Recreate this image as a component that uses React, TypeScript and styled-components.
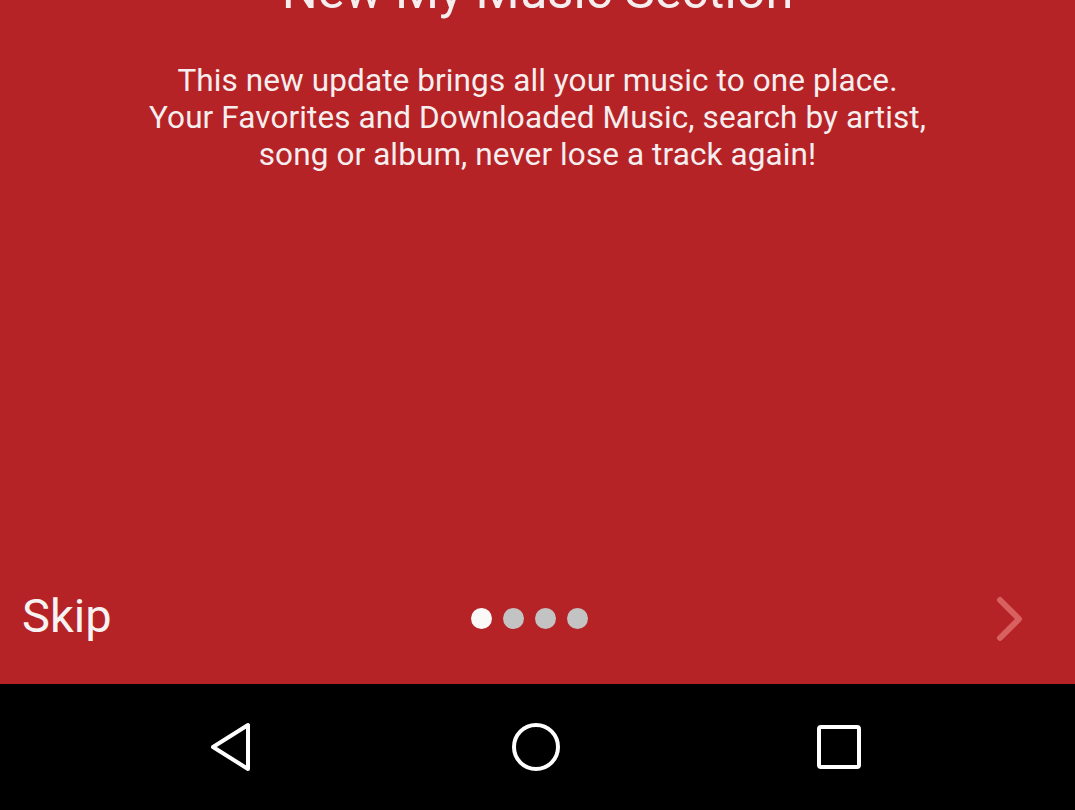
import styled, { createGlobalStyle } from "styled-components";

const Global = createGlobalStyle`
  html, body {
    margin: 0;
    padding: 0;
    overflow: hidden;
  }
  body {
    font-family: Roboto, "Liberation Sans", sans-serif;
  }
`;

const Screen = styled.div`
  width: 1075px;
  height: 810px;
  display: flex;
  flex-direction: column;
  overflow: hidden;
`;

const Slide = styled.div`
  flex: 1;
  background: #b52327;
  display: flex;
  flex-direction: column;
  color: #f6eeee;
`;

const Title = styled.h1`
  margin: -35px 0 0;
  font-size: 50.5px;
  line-height: 52px;
  font-weight: 400;
  text-align: center;
`;

const Body = styled.p`
  margin: 45px 0 0;
  font-size: 31.5px;
  line-height: 37px;
  letter-spacing: 0.1px;
  text-align: center;
`;

const Footer = styled.div`
  margin-top: auto;
  height: 72px;
  margin-bottom: 33px;
  display: grid;
  grid-template-columns: 1fr auto 1fr;
  align-items: center;
  padding: 0 48px 0 22px;
`;

const Skip = styled.span`
  font-size: 47px;
  color: #f8f2f2;
`;

const Dots = styled.div`
  display: flex;
  gap: 11px;
  margin-left: 10px;
  margin-top: 6px;
`;

const Dot = styled.span<{ $active?: boolean }>`
  width: 21px;
  height: 21px;
  border-radius: 50%;
  background: ${(p) => (p.$active ? "#fbf8f8" : "#c3c3c3")};
`;

const Next = styled.div`
  justify-self: end;
  display: flex;
  margin-top: 8px;
  margin-right: 2px;
`;

const NavBar = styled.div`
  height: 126px;
  background: #000;
  display: flex;
  align-items: center;
  justify-content: center;
  gap: 253px;
  padding-right: 3px;
`;

const NavIcon = styled.svg`
  width: 50px;
  height: 50px;
  display: block;
`;

export default function App() {
  return (
    <>
      <Global />
      <Screen>
        <Slide>
          <Title>New My Music Section</Title>
          <Body>
            This new update brings all your music to one place.
            <br />
            Your Favorites and Downloaded Music, search by artist,
            <br />
            song or album, never lose a track again!
          </Body>
          <Footer>
            <Skip>Skip</Skip>
            <Dots>
              <Dot $active />
              <Dot />
              <Dot />
              <Dot />
            </Dots>
            <Next>
              <svg width="30" height="46" viewBox="0 0 30 46">
                <path
                  d="M5 4 L24 23 L5 42"
                  fill="none"
                  stroke="#d8605f"
                  strokeWidth="6"
                  strokeLinecap="round"
                  strokeLinejoin="round"
                />
              </svg>
            </Next>
          </Footer>
        </Slide>
        <NavBar>
          <NavIcon viewBox="0 0 50 50">
            <path
              d="M40 3 L40 47 L5 25 Z"
              fill="none"
              stroke="#fff"
              strokeWidth="4"
              strokeLinejoin="round"
            />
          </NavIcon>
          <NavIcon viewBox="0 0 50 50">
            <circle cx="25" cy="25" r="22" fill="none" stroke="#fff" strokeWidth="4" />
          </NavIcon>
          <NavIcon viewBox="0 0 50 50">
            <rect x="5" y="5" width="40" height="40" rx="2" fill="none" stroke="#fff" strokeWidth="4" />
          </NavIcon>
        </NavBar>
      </Screen>
    </>
  );
}
